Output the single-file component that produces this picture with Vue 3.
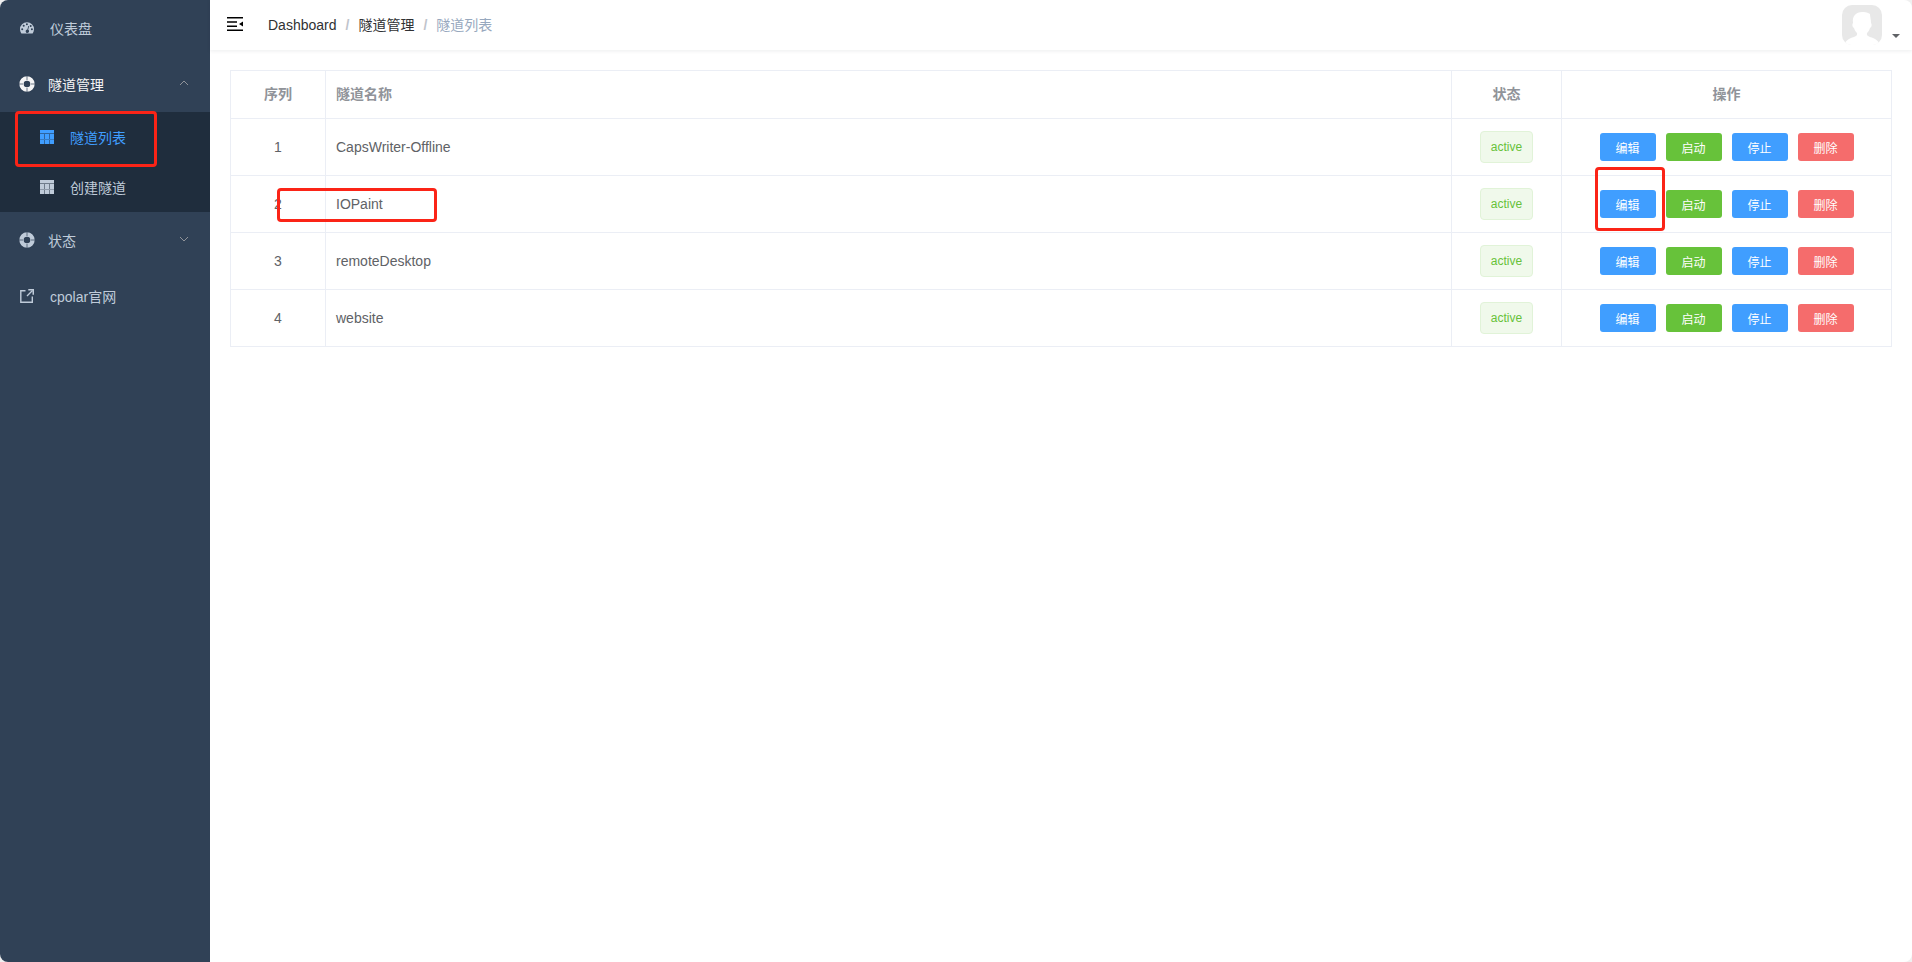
<template>
  <div class="app-wrapper">
    <aside class="sidebar">
      <nav class="menu">
        <a href="#/dashboard" class="menu-item">
          <svg class="icon" viewBox="0 0 14 14">
            <path fill="currentColor" fill-rule="evenodd" d="M7 1.2a7 7 0 0 0-7 7c0 1.5.4 2.8 1.2 4 .2.3.4.4.7.4h10.2c.3 0 .5-.1.7-.4.8-1.2 1.2-2.500 1.200-4a7 7 0 0 0-7-7zM2.200 7.300a1 1 0 1 1 0 2 1 1 0 0 1 0-2zM3.700 3.800a1 1 0 1 1 0 2 1 1 0 0 1 0-2zM6.900 2.300a1 1 0 1 1 0 2 1 1 0 0 1 0-2zM10.700 3.900a1 1 0 1 1 0 2 1 1 0 0 1 0-2zM11.900 7.300a1 1 0 1 1 0 2 1 1 0 0 1 0-2zM8.300 4.900l.8.2-.9 3.700a1.700 1.700 0 1 1-.8-.2z" />
          </svg>
          <span>仪表盘</span>
        </a>

        <button type="button" class="menu-item submenu-title is-active" :aria-expanded="tunnelOpen" @click="tunnelOpen = !tunnelOpen">
          <svg class="icon-help" viewBox="0 0 16 16">
            <circle cx="8" cy="8" r="5.500" fill="none" stroke="currentColor" stroke-width="4.400" />
            <path class="spoke" d="M8 0v4M8 12v4M0 8h4M12 8h4" />
          </svg>
          <span>隧道管理</span>
          <svg class="arrow" :class="{ down: !tunnelOpen }" viewBox="0 0 12 12">
            <path d="M2 8l4-4 4 4" />
          </svg>
        </button>
        <div v-if="tunnelOpen" class="submenu">
          <a v-for="item in tunnelMenu" :key="item.title" :href="item.href" class="menu-item" :class="{ current: item.current }">
            <svg class="icon" viewBox="0 0 14 14">
              <path fill="currentColor" d="M0 0h14v3H0zM0 4h4v5H0zM5 4h4v5H5zM10 4h4v5h-4zM0 10h4v4H0zM5 10h4v4H5zM10 10h4v4h-4z" />
              <path fill="currentColor" opacity="0.5" d="M0 3h14v1H0zM4 4h1v5H4zM9 4h1v5H9zM4 10h1v4H4zM9 10h1v4H9z" />
              <path fill="currentColor" opacity="0.7" d="M0 9h14v1H0z" />
            </svg>
            <span>{{ item.title }}</span>
            <i v-if="item.current" class="mark mark-menu"></i>
          </a>
        </div>

        <button type="button" class="menu-item submenu-title" aria-expanded="false">
          <svg class="icon-help" viewBox="0 0 16 16">
            <circle cx="8" cy="8" r="5.500" fill="none" stroke="currentColor" stroke-width="4.400" />
            <path class="spoke" d="M8 0v4M8 12v4M0 8h4M12 8h4" />
          </svg>
          <span>状态</span>
          <svg class="arrow down" viewBox="0 0 12 12">
            <path d="M2 8l4-4 4 4" />
          </svg>
        </button>

        <a href="#/cpolar" class="menu-item">
          <svg class="icon" viewBox="0 0 14 14">
            <path fill="none" stroke="currentColor" stroke-width="1.400" d="M5.500 1.700H.8v11.500h11.500V7.500M7 7l5.500-5.500" />
            <path fill="currentColor" d="M8.300 0H14v5.700h-1.500V1.500H8.300z" />
          </svg>
          <span>cpolar官网</span>
        </a>
      </nav>
    </aside>

    <div class="main-container">
      <header class="navbar">
        <button type="button" class="hamburger" aria-label="menu">
          <svg viewBox="0 0 16 14">
            <path d="M0 0h16v1.500H0zM0 4.200h10v1.500H0zM0 8.400h10v1.500H0zM0 12.500h16V14H0zM16 4.500v5L12 7z" />
          </svg>
        </button>
        <nav class="breadcrumb">
          <a href="#/dashboard">Dashboard</a>
          <span class="separator">/</span>
          <a href="#/tunnels">隧道管理</a>
          <span class="separator">/</span>
          <span class="no-redirect">隧道列表</span>
        </nav>
        <button type="button" class="avatar" aria-label="user">
          <svg class="avatar-img" viewBox="0 0 40 40">
            <rect width="40" height="40" fill="#e8e8e8" />
            <path fill="#fff" d="M11 18c-1-7 3-11 9-11 3 0 4 0 6 1l2 1c0 3 1 5 1 9 1 1 1 4-1 5-1 3-2 4-3 5-1 3 3 4 6 5 3 1 5 3 6 5v2H3v-2c1-2 3-4 6-5 3-1 7-2 6-5-1-1-2-2-3-5-2-1-2-4-1-5z" />
            <path fill="#fff" d="M0 38h40v2H0z" />
          </svg>
          <svg class="caret" viewBox="0 0 8 4">
            <path d="M0 0h8L4 4z" />
          </svg>
        </button>
      </header>

      <main class="app-main">
        <table class="tunnel-table">
          <colgroup>
            <col class="col-index" />
            <col />
            <col class="col-status" />
            <col class="col-actions" />
          </colgroup>
          <thead>
            <tr>
              <th>序列</th>
              <th class="name">隧道名称</th>
              <th>状态</th>
              <th>操作</th>
            </tr>
          </thead>
          <tbody>
            <tr v-for="(tunnel, index) in tunnels" :key="tunnel.name">
              <td>{{ index + 1 }}</td>
              <td class="name">
                {{ tunnel.name }}
                <i v-if="tunnel.marked" class="mark mark-name"></i>
              </td>
              <td><span class="tag">{{ tunnel.status }}</span></td>
              <td>
                <div class="actions">
                  <button v-for="action in actions" :key="action.label" type="button" class="btn" :class="action.type">
                    {{ action.label }}
                    <i v-if="tunnel.marked && action.label === '编辑'" class="mark mark-edit"></i>
                  </button>
                </div>
              </td>
            </tr>
          </tbody>
        </table>
      </main>
    </div>
  </div>
</template>

<script setup>
import { ref } from 'vue'

const tunnelOpen = ref(true)

const tunnelMenu = [
  { title: '隧道列表', href: '#/tunnels/list', current: true },
  { title: '创建隧道', href: '#/tunnels/create', current: false }
]

const tunnels = ref([
  { name: 'CapsWriter-Offline', status: 'active' },
  { name: 'IOPaint', status: 'active', marked: true },
  { name: 'remoteDesktop', status: 'active' },
  { name: 'website', status: 'active' }
])

const actions = [
  { label: '编辑', type: 'primary' },
  { label: '启动', type: 'success' },
  { label: '停止', type: 'primary' },
  { label: '删除', type: 'danger' }
]
</script>

<style>
body {
  margin: 0;
  background: #f0f0f0;
}
</style>

<style scoped>
.app-wrapper {
  display: flex;
  min-height: 100vh;
  overflow: hidden;
  border-radius: 8px;
  background: #fff;
  font-family: "Liberation Sans", "Noto Sans CJK SC", sans-serif;
  font-size: 14px;
}

.app-wrapper *,
.app-wrapper {
  box-sizing: border-box;
}

a {
  text-decoration: none;
}

button {
  padding: 0;
  border: 0;
  background: none;
  font-family: inherit;
  font-size: inherit;
  cursor: pointer;
}

.sidebar {
  flex: 0 0 210px;
  background: #304156;
}

.menu-item {
  display: flex;
  align-items: center;
  width: 100%;
  height: 56px;
  padding: 0 20px;
  color: #bfcbd9;
  white-space: nowrap;
}

.menu-item.is-active {
  color: #f4f4f5;
}

.icon {
  width: 14px;
  height: 14px;
  margin-right: 16px;
}

.icon-help {
  width: 16px;
  height: 16px;
  margin-right: 13px;
}

.submenu-title {
  padding-left: 19px;
}

.spoke {
  stroke: #304156;
  stroke-width: 1;
  opacity: 0.7;
}

.arrow {
  width: 12px;
  height: 12px;
  margin-bottom: 2px;
  margin-left: auto;
  fill: none;
  stroke: #909399;
  stroke-width: 1;
}

.arrow.down {
  transform: rotate(180deg);
}

.submenu {
  background: #1f2d3d;
}

.submenu .menu-item {
  position: relative;
  height: 50px;
  padding-left: 40px;
}

.submenu .menu-item.current {
  color: #409eff;
}

.main-container {
  flex: 1;
  min-width: 0;
}

.navbar {
  display: flex;
  align-items: center;
  height: 50px;
  padding: 0 12px 0 17px;
  box-shadow: 0 1px 4px rgba(0, 21, 41, 0.08);
}

.hamburger {
  width: 16px;
  height: 14px;
  margin: 0 25px 2px 0;
}

.hamburger svg {
  display: block;
}

.breadcrumb {
  display: flex;
  align-items: baseline;
  height: 20px;
  color: #303133;
  line-height: 20px;
}

.breadcrumb a {
  color: #303133;
}

.breadcrumb .separator {
  margin: 0 9px;
  color: #c0c4cc;
  font-weight: 700;
}

.breadcrumb .no-redirect {
  color: #97a8be;
}

.avatar {
  display: flex;
  align-items: flex-end;
  gap: 10px;
  margin-left: auto;
}

.avatar-img {
  width: 40px;
  height: 40px;
  border-radius: 10px;
}

.caret {
  width: 8px;
  height: 4px;
  margin-bottom: 7px;
  fill: #606266;
}

.app-main {
  padding: 20px;
}

.tunnel-table {
  width: 100%;
  table-layout: fixed;
  border-collapse: separate;
  border-spacing: 0;
  border-top: 1px solid #ebeef5;
  border-left: 1px solid #ebeef5;
  color: #606266;
}

.col-index {
  width: 95px;
}

.col-status {
  width: 110px;
}

.col-actions {
  width: 330px;
}

th,
td {
  height: 57px;
  padding: 0 10px;
  border-right: 1px solid #ebeef5;
  border-bottom: 1px solid #ebeef5;
  text-align: center;
}

th {
  height: 48px;
  padding-bottom: 3px;
  color: #909399;
  font-weight: 700;
}

.name {
  position: relative;
  text-align: left;
}

.tag {
  display: inline-block;
  height: 32px;
  padding: 0 10px;
  border: 1px solid #e1f3d8;
  border-radius: 4px;
  background: #f0f9eb;
  color: #67c23a;
  font-size: 12px;
  line-height: 30px;
  vertical-align: middle;
}

.actions {
  display: flex;
  justify-content: center;
  gap: 10px;
}

.btn {
  position: relative;
  width: 56px;
  height: 28px;
  border-radius: 3px;
  color: #fff;
  font-size: 12px;
}

.primary {
  background: #409eff;
}

.success {
  background: #67c23a;
}

.danger {
  background: #f56c6c;
}

/* red highlight frames */
.mark {
  position: absolute;
  z-index: 1;
  border: 3px solid #fb2417;
  border-radius: 4px;
  pointer-events: none;
}

.mark-menu {
  top: -1px;
  left: 15px;
  width: 142px;
  height: 56px;
}

.mark-name {
  top: 12px;
  left: -49px;
  width: 160px;
  height: 34px;
}

.mark-edit {
  top: -23px;
  left: -5px;
  width: 70px;
  height: 64px;
}
</style>
